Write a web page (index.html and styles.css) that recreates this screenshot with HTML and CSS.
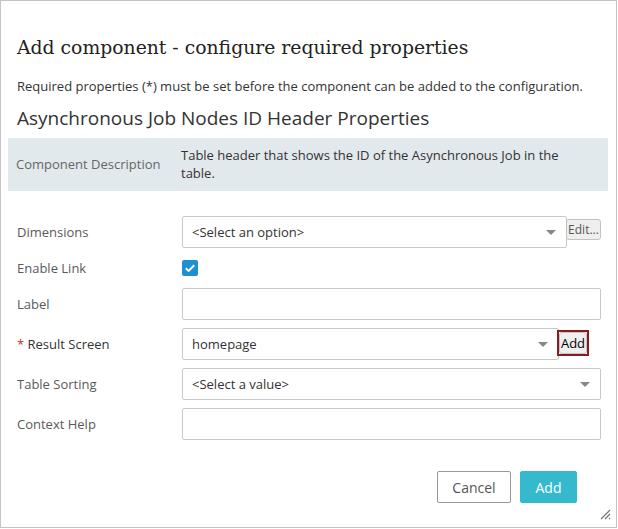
FILE: index.html
```html
<!DOCTYPE html>
<html>
<head>
<meta charset="utf-8">
<link rel="stylesheet" href="styles.css">
</head>
<body>
<div class="dialog">
  <h1 class="title">Add component - configure required properties</h1>
  <p class="intro">Required properties (*) must be set before the component can be added to the configuration.</p>
  <h2 class="subtitle">Asynchronous Job Nodes ID Header Properties</h2>
  <div class="desc">
    <div class="desc-label">Component Description</div>
    <div class="desc-text">Table header that shows the ID of the Asynchronous Job in the table.</div>
  </div>
  <div class="form">
    <div class="row">
      <div class="label">Dimensions</div>
      <div class="field">
        <div class="select sel-dim"><span>&lt;Select an option&gt;</span><i class="arrow"></i></div>
        <button class="mini edit">Edit...</button>
      </div>
    </div>
    <div class="row row-check">
      <div class="label">Enable Link</div>
      <div class="field">
        <span class="check"><svg width="16" height="16" viewBox="0 0 16 16"><path d="M3.8 8.2 L6.6 10.9 L12.2 5.2" fill="none" stroke="#fff" stroke-width="2"/></svg></span>
      </div>
    </div>
    <div class="row">
      <div class="label">Label</div>
      <div class="field"><div class="input"></div></div>
    </div>
    <div class="row">
      <div class="label req"><span class="star">*</span> Result Screen</div>
      <div class="field">
        <div class="select sel-res"><span>homepage</span><i class="arrow"></i></div>
        <span class="focus"><button class="mini addsmall">Add</button></span>
      </div>
    </div>
    <div class="row">
      <div class="label">Table Sorting</div>
      <div class="field"><div class="select sel-full"><span>&lt;Select a value&gt;</span><i class="arrow"></i></div></div>
    </div>
    <div class="row">
      <div class="label">Context Help</div>
      <div class="field"><div class="input"></div></div>
    </div>
  </div>
  <div class="footer">
    <button class="btn cancel">Cancel</button>
    <button class="btn primary">Add</button>
  </div>
  <svg class="grip" width="12" height="12" viewBox="0 0 12 12"><path d="M11 2 L2 11 M11 6 L6 11 M11 10 L10 11" stroke="#777" stroke-width="1.2"/></svg>
</div>
</body>
</html>
```
FILE: styles.css
```css
html, body { margin: 0; padding: 0; background: #fff; }
body { font-family: "Open Sans", "Noto Sans", sans-serif; color: #333; }
.dialog {
  position: relative;
  box-sizing: border-box;
  width: 617px;
  height: 528px;
  border: 1px solid #c4c4c4;
  padding: 35px 8px 0 8px;
}
.title {
  font-family: "DejaVu Serif", serif;
  font-weight: normal;
  font-size: 18.8px;
  line-height: 24px;
  margin: 0 0 17px 8px;
  color: #222;
}
.intro {
  font-size: 13px;
  line-height: 18px;
  margin: 0 0 10px 8px;
  color: #333;
}
.subtitle {
  font-weight: normal;
  font-size: 19px;
  line-height: 26px;
  margin: 0 0 7px 8px;
  color: #333;
}
.desc {
  display: flex;
  background: #e2e9ec;
  padding: 8px 0 9px 8px;
  margin-left: -1px;
  font-size: 13px;
  line-height: 18px;
}
.desc-label { width: 165px; align-self: center; color: #666; }
.desc-text { width: 400px; color: #333; }
.form { margin-top: 25px; padding-left: 8px; }
.row { display: flex; align-items: center; height: 32px; margin-bottom: 8px; }
.row-check { height: 24px; }
.label { width: 165px; font-size: 13px; color: #595959; }
.label.req { color: #333; }
.star { color: #c0282d; }
.field { display: flex; align-items: center; flex: 1; }
.select, .input {
  box-sizing: border-box;
  height: 32px;
  border: 1px solid #c9c9c9;
  border-radius: 2px;
  display: flex;
  align-items: center;
  padding: 0 0 0 9px;
  font-size: 13px;
  color: #333;
}
.input { width: 419px; }
.sel-dim { width: 385px; }
.sel-res { width: 377px; }
.sel-full { width: 419px; }
.select span { flex: 1; }
.arrow {
  width: 0; height: 0;
  border-left: 5px solid transparent;
  border-right: 5px solid transparent;
  border-top: 5px solid #888;
  margin-right: 10px;
}
.mini {
  font-family: "Open Sans", sans-serif;
  box-sizing: border-box;
  background: #efefef;
  border: 1px solid #c2c2c2;
  border-radius: 3px;
  padding: 0;
  cursor: default;
}
.edit {
  width: 35px; height: 21px;
  font-size: 12px; color: #555;
  margin-left: -1px;
  margin-top: -6px;
}
.focus {
  display: inline-flex;
  border: 2px solid #8b1a1f;
  margin-left: -2px;
  margin-top: -3px;
}
.addsmall {
  width: 28px; height: 22px;
  font-size: 13px; color: #000;
  line-height: 18px;
}
.check {
  display: inline-block;
  width: 16px; height: 16px;
  background: #1f8fd3;
  border-radius: 2px;
}
.check svg { display: block; }
.footer {
  display: flex;
  justify-content: flex-end;
  gap: 9px;
  margin-top: 31px;
  padding-right: 31px;
}
.btn {
  font-family: "Open Sans", sans-serif;
  font-size: 14px;
  height: 32px;
  border-radius: 2px;
  padding: 0;
}
.cancel { width: 74px; background: #fff; border: 1px solid #999; color: #555; }
.primary { width: 57px; background: #35bacd; border: 1px solid #35bacd; color: #fff; }
.grip { position: absolute; right: 5px; bottom: 7px; }
```
